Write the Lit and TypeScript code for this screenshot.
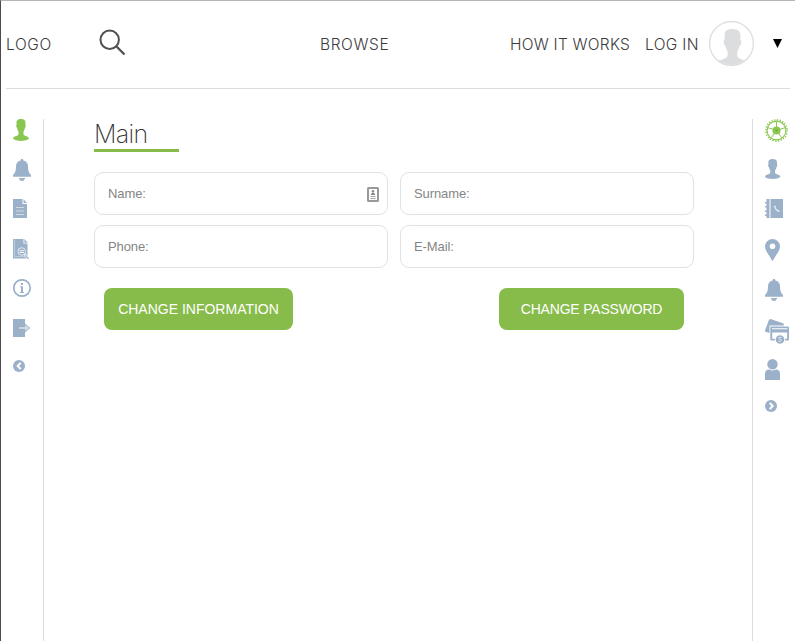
import { LitElement, html, css, svg } from "lit";
import { customElement, property } from "lit/decorators.js";

const userShape = svg`<path d="M8 0C4.600 0 3.300 1.600 3.500 4.500L3.600 6C2.900 6.300 3.200 8.300 4 8.800C4.300 11 5.300 11.800 5.500 13V15.500C4.500 17.300 0.500 17 0 19.500C2 22.700 14 22.700 16 19.500C15.500 17 11.500 17.300 10.500 15.500V13C10.700 11.800 11.700 11 12 8.800C12.800 8.300 13.100 6.300 12.400 6L12.500 4.500C12.700 1.600 11.400 0 8 0Z"/>`;

const icons = {
  user: userShape,
  userSmall: svg`<g transform="scale(.96 .91)">${userShape}</g>`,
  bell: svg`<path d="M9 0C9.900 0 10.400.7 10.400 1.600C13.400 2.200 15 4.600 15 7.500C15 12 16 14 18 16V17.700H0V16C2 14 3 12 3 7.500C3 4.600 4.600 2.200 7.600 1.600C7.600.7 8.100 0 9 0ZM6 19H12V20.200H11.300L10.800 21.800H7.200L6.700 20.200H6Z"/>`,
  doc: svg`<path d="M0 0H9.500V5H14V19H0ZM10.500.3L14 4H10.500Z"/><path d="M3 8.500H11M3 12H11M3 15.500H11" stroke="#d3d8dc" stroke-width="1.200"/>`,
  report: svg`<path d="M0 0H10.500V4.500H14.500V19.500H0Z"/><path d="M11.300 0L14.800 3.700H11.300Z"/><path d="M1.500.5V17.500H14" fill="none" stroke="#c6d3df" stroke-width=".8"/><circle cx="8.700" cy="12.500" r="3.800" stroke="#e4eaf0" stroke-width="1"/><path d="M6.500 11.700H11M6.500 13.500H11" stroke="#fff" stroke-width=".9"/><path d="M11.500 15.300L15.800 19.800" stroke="#fff" stroke-width="2.500"/><path d="M12 16L15.700 19.800" stroke="#9ab1c9" stroke-width="1.200"/>`,
  info: svg`<circle cx="9" cy="9" r="8.200" fill="none" stroke="#9ab1c9" stroke-width="1.700"/><rect x="8" y="4" width="2" height="2"/><path d="M7 7.300H10V13H11V14H7V13H8V8.300H7Z"/>`,
  exit: svg`<path d="M0 0H12V18H0Z"/><path d="M5.500 7.700H11.800V4.800L16.800 9L11.800 13.200V10.300H5.500Z" fill="#d9dde1" stroke="#91a6bb" stroke-width=".8"/>`,
  back: svg`<circle cx="6" cy="7" r="6"/><path d="M7.700 3.900L4.700 7L7.700 10.100" fill="none" stroke="#fff" stroke-width="2"/>`,
  forward: svg`<circle cx="6" cy="7" r="6"/><path d="M4.700 3.900L7.700 7L4.700 10.100" fill="none" stroke="#fff" stroke-width="2"/>`,
  gear: svg`<g fill="none" stroke="#8cc652"><circle cx="11.500" cy="11.500" r="10.600" stroke-width="1.600" stroke-dasharray="1.300 1.475"/><circle cx="11.500" cy="11.500" r="9.400" stroke-width="1.100"/><path d="M11.500 11.500V2.500M11.500 11.500L20 8.700M11.500 11.500L16.800 18.800M11.500 11.500L6.200 18.800M11.500 11.500L3 8.700" stroke-width="1"/></g><circle cx="11.500" cy="11.500" r="4" fill="#8cc652"/><circle cx="11.500" cy="11.500" r="1" fill="#6eaa38"/>`,
  contacts: svg`<path d="M1.500 0H4.500V19H1.500V17H0V15.500H1.500V13H0V11.500H1.500V8.500H0V7H1.500V4.500H0V3H1.500ZM5.500 0H18V19H5.500Z"/><path d="M9 7L10.200 6.500L11 8L10.500 8.800L12.800 11.200L13.700 11L14.800 12.200L14 13C12 13 9 9.500 9 7Z" fill="#e6edf4"/>`,
  pin: svg`<path fill-rule="evenodd" d="M7.500 0A7.500 7.500 0 0 1 15 7.500C15 12 10 17 7.700 22H7.300C5 17 0 12 0 7.500A7.500 7.500 0 0 1 7.500 0ZM7.500 4.500A2.800 2.800 0 1 0 7.500 10.100A2.800 2.800 0 1 0 7.500 4.500Z"/>`,
  cards: svg`<path d="M5.500 0L18.500 4.500L19 6.500H4.500V14L0 12.500V11.500L4 .7Z"/><path fill-rule="evenodd" d="M6.500 7.500H23Q24 7.500 24 8.500V20.500Q24 21.500 23 21.500H6.500Q5.300 21.500 5.300 20.500V8.500Q5.300 7.500 6.500 7.500ZM7 9.300V10.200H22.500V9.300ZM7.200 13.500V19.700H22.200V13.500Z"/><circle cx="15" cy="20.500" r="4.700" stroke="#fff" stroke-width="1"/><path d="M16.700 18.700Q13.400 17.800 13.600 19.400Q15 20.500 16.500 21.300Q16.300 23 13.400 22.200" fill="none" stroke="#edf2f6" stroke-width=".8"/>`,
  person: svg`<circle cx="7.500" cy="5.200" r="5.200"/><path d="M0 21V15Q0 10.700 4 10.500Q7.500 12.500 11 10.500Q15 10.700 15 15V21Z"/>`,
};

type IconName = keyof typeof icons;

@customElement("side-rail")
class SideRail extends LitElement {
  @property({ attribute: false }) names: IconName[] = [];

  static styles = css`
    :host { display: flex; flex-direction: column; }
    .slot { height: 40px; flex: none; }
    svg { display: block; width: 26px; height: 26px; fill: #9ab1c9; }
    .slot:first-child svg { fill: #8cc652; }
  `;

  render() {
    return this.names.map(
      (name) => html`<div class="slot"><svg viewBox="0 0 26 26">${icons[name]}</svg></div>`
    );
  }
}

@customElement("form-field")
class FormField extends LitElement {
  @property() label = "";
  @property({ type: Boolean }) card = false;

  static styles = css`
    :host {
      display: flex; align-items: center; justify-content: space-between;
      box-sizing: border-box; height: 43px; padding: 0 8px 0 13px;
      border: 1px solid #e2e2e2; border-radius: 9px;
      font: 13px "Liberation Sans", Arial, sans-serif; color: #858585;
      letter-spacing: -.1px;
    }
    svg { display: block; width: 12px; height: 15px; margin-top: 1px; }
  `;

  render() {
    return html`<span>${this.label}</span>${this.card
      ? html`<svg viewBox="0 0 12 15">
          <rect x="1" y="1" width="10" height="13" rx=".6" fill="#fff" stroke="#999" stroke-width="2"/>
          <circle cx="6" cy="4.300" r="1.200" fill="#888"/>
          <path d="M3.800 8Q4 5.500 6 5.500Q8 5.500 8.200 8Z" fill="#888"/>
          <path d="M3.500 9.500H8.500M3.500 11.500H8.500" stroke="#aaa" stroke-width="1"/>
        </svg>`
      : ""}`;
  }
}

@customElement("app-root")
class AppRoot extends LitElement {
  static styles = css`
    :host {
      display: flex; flex-direction: column; box-sizing: border-box;
      height: 641px; padding: 0 5px; overflow: hidden; background: #fff;
      border-top: 1px solid #b5b5b5; border-left: 1px solid #4b4b4b;
      font-family: "Liberation Sans", Arial, sans-serif; color: #444;
    }
    header {
      display: flex; align-items: center; flex: none; box-sizing: border-box;
      height: 88px; border-bottom: 1px solid #dcdcdc;
      font: 300 15.500px/20px Inter, "Liberation Sans", sans-serif;
      color: #3c3c3c; white-space: nowrap;
    }
    .logo { width: 93px; letter-spacing: .6px; }
    .search { width: 27px; height: 27px; margin-top: -4px; }
    .browse { margin-left: 194px; width: 190px; letter-spacing: .6px; }
    .how { width: 135px; letter-spacing: .25px; }
    .login { width: 64px; letter-spacing: .35px; }
    .avatar { width: 45px; height: 45px; margin-top: -2px; }
    .caret { width: 9px; height: 9px; margin: -2px 0 0 19px; }
    .body { display: flex; flex: 1; padding-top: 30px; }
    .left { width: 30px; padding-left: 7px; border-right: 1px solid #dcdcdc; }
    .right { width: 25px; padding-left: 12px; border-left: 1px solid #dcdcdc; }
    main { flex: 1; padding: 0 58px 0 50px; }
    h1 {
      box-sizing: border-box; width: 85px; height: 33px; margin: 0 0 20px;
      border-bottom: 3px solid #87bb4a; color: #333;
      font: 200 25px/30px Inter, "Liberation Sans", sans-serif;
      letter-spacing: -.7px;
    }
    .fields { display: grid; grid-template-columns: 294px 294px; gap: 10px 12px; }
    .actions { display: flex; justify-content: space-between; padding: 20px 10px 0; }
    button {
      width: 189px; height: 42px; padding: 0; border: 0; border-radius: 8px;
      background: #87bb4a; color: #fff; white-space: nowrap;
      font: 14px "Liberation Sans", Arial, sans-serif;
    }
    .password { width: 185px; letter-spacing: -.2px; }
  `;

  render() {
    return html`
      <header>
        <span class="logo">LOGO</span>
        <svg class="search" viewBox="0 0 27 27" fill="none" stroke="#505050">
          <circle cx="10.700" cy="10.700" r="9.200" stroke-width="2"/>
          <path d="M17.500 17.500L25.500 25.500" stroke-width="2.300"/>
        </svg>
        <span class="browse">BROWSE</span>
        <span class="how">HOW IT WORKS</span>
        <span class="login">LOG IN</span>
        <svg class="avatar" viewBox="0 0 45 45">
          <defs><clipPath id="disc"><circle cx="22.500" cy="22.500" r="21.500"/></clipPath></defs>
          <circle cx="22.500" cy="22.500" r="21.900" fill="#fff" stroke="#dcddde" stroke-width="1.300"/>
          <path clip-path="url(#disc)" fill="#dcddde" d="M23 8C17.500 8 15.300 10.500 15.600 15V19C14.200 19.500 14.500 24 16.300 24.500C17 28 18.600 30 18.700 31V34.500C17 39 10 38 7 42V45H39V42C36 38 29 39 28.300 34.500V31C28.400 30 30 28 30.700 24.500C32.500 24 32.800 19.500 31.400 19V14C31 10.500 29.500 8 23 8Z"/>
        </svg>
        <svg class="caret" viewBox="0 0 9 9"><path d="M0 0H9L4.500 9Z"/></svg>
      </header>
      <div class="body">
        <side-rail class="left" .names=${["user", "bell", "doc", "report", "info", "exit", "back"]}></side-rail>
        <main>
          <h1>Main</h1>
          <div class="fields">
            <form-field label="Name:" card></form-field>
            <form-field label="Surname:"></form-field>
            <form-field label="Phone:"></form-field>
            <form-field label="E-Mail:"></form-field>
          </div>
          <div class="actions">
            <button>CHANGE INFORMATION</button>
            <button class="password">CHANGE PASSWORD</button>
          </div>
        </main>
        <side-rail class="right" .names=${["gear", "userSmall", "contacts", "pin", "bell", "cards", "person", "forward"]}></side-rail>
      </div>
    `;
  }
}
